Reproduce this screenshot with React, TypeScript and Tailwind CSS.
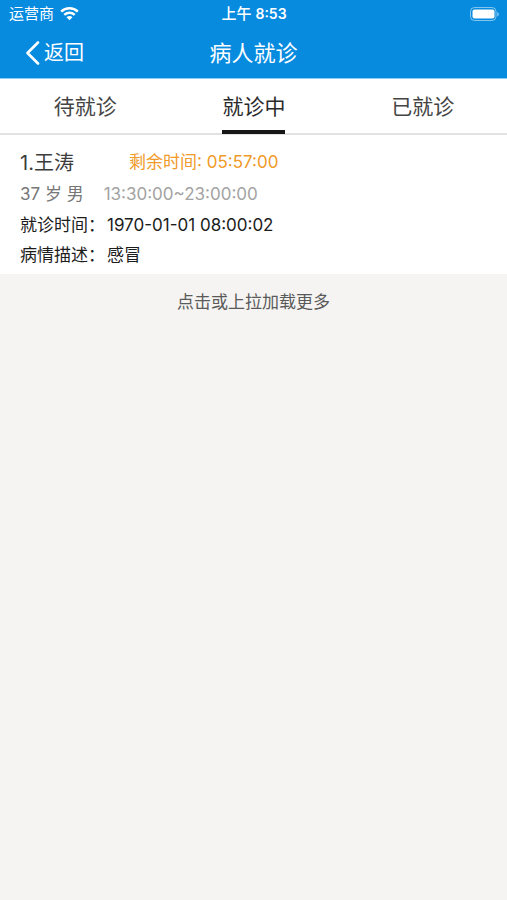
import { useState } from "react";

const tabs = ["待就诊", "就诊中", "已就诊"];

function StatusBar() {
  return (
    <div className="grid h-7 grid-cols-3 items-center pr-2 pl-[9px] text-[15px] leading-5">
      <div className="flex items-center gap-1.5">
        <span>运营商</span>
        <svg className="h-[14px] w-[19px]" viewBox="0 0 19 14" fill="none" stroke="currentColor" aria-hidden="true">
          <path d="M1.2 4.600C5.8 .2 13.2 .2 17.8 4.600" strokeWidth="2.5" />
          <path d="M4.3 7.900C7.3 5.100 11.7 5.100 14.7 7.900" strokeWidth="2.4" />
          <path d="M9.5 13.200 6.5 10.200C8.2 8.700 10.8 8.700 12.5 10.200Z" fill="currentColor" stroke="none" />
        </svg>
      </div>
      <div className="text-center font-medium">
        上午 <span className="text-[14px] font-semibold">8:53</span>
      </div>
      <svg className="h-[14px] w-[29px] justify-self-end" viewBox="0 0 29 14" aria-hidden="true">
        <rect x=".5" y=".5" width="25.5" height="13" rx="4" fill="none" stroke="#fff" strokeOpacity=".5" />
        <rect x="2.5" y="2.5" width="22" height="9" rx="2" fill="#fff" />
        <path d="M27.3 5v4.400c2-.9 2-3.500 0-4.400Z" fill="#fff" fillOpacity=".55" />
      </svg>
    </div>
  );
}

export default function App() {
  const [active, setActive] = useState(1);
  return (
    <div className="min-h-screen bg-[#f5f4f2] font-[Inter,'Noto_Sans_CJK_SC',sans-serif] text-[#1c1c1c]">
      <header className="border-b border-[#8ccbf2] bg-[#078bdf] text-white">
        <StatusBar />
        <div className="grid h-[50px] grid-cols-3 items-center">
          <button type="button" className="flex items-center gap-1 pl-[25px] text-[20px] leading-7">
            <svg className="h-6 w-[15px]" viewBox="0 0 15 24" fill="none" stroke="currentColor" strokeWidth="2.6" strokeLinecap="round" strokeLinejoin="round" aria-hidden="true">
              <path d="M13 1.500 2.500 12 13 22.500" />
            </svg>
            返回
          </button>
          <h1 className="text-center text-[22px] leading-7">病人就诊</h1>
        </div>
      </header>
      <nav className="grid h-14 grid-cols-3 border-b-2 border-[#e2e2e2] bg-white pl-px" role="tablist">
        {tabs.map((label, i) => (
          <button
            key={label}
            type="button"
            role="tab"
            aria-selected={i === active}
            onClick={() => setActive(i)}
            className={
              i === active
                ? "-mb-px justify-self-center border-b-4 border-[#161616] pt-1 text-[21px] text-[#2a2a2a]"
                : "-mb-px justify-self-center border-b-4 border-transparent pt-1 text-[21px] text-[#444]"
            }
          >
            {label}
          </button>
        ))}
      </nav>
      <main>
        <article className="bg-white px-5 pt-3 pb-[3px] text-[17px]">
          <div className="flex h-8 items-center">
            <h2 className="w-[109px] text-[20px] text-[#3c3c3c]">1.王涛</h2>
            <span className="text-[#f09a28]">剩余时间: 05:57:00</span>
          </div>
          <div className="flex h-8 items-center gap-5">
            <span className="text-[#777]">37 岁 男</span>
            <span className="text-[#a3a3a3]">13:30:00~23:00:00</span>
          </div>
          <p className="flex h-[30px] items-center gap-0.5">
            <span>就诊时间：</span>
            <span>1970-01-01 08:00:02</span>
          </p>
          <p className="flex h-[30px] items-center gap-0.5">
            <span>病情描述：</span>
            <span>感冒</span>
          </p>
        </article>
        <button type="button" className="block w-full pt-4 pb-3 text-[17px] leading-6 text-[#5a5a5a]">
          点击或上拉加载更多
        </button>
      </main>
    </div>
  );
}
